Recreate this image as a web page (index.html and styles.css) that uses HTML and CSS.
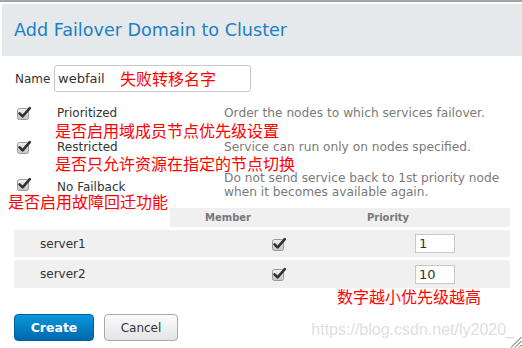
FILE: index.html
```html
<!DOCTYPE html>
<html lang="en">
<head>
    <meta charset="UTF-8">
    <title>Add Failover Domain to Cluster</title>
    <link rel="stylesheet" href="styles.css">
</head>
<body>
    <svg width="0" height="0" class="defs">
        <defs>
            <linearGradient id="boxGrad" x1="0" y1="0" x2="0" y2="1">
                <stop offset="0" stop-color="#f2f2f2"/>
                <stop offset="1" stop-color="#c4c4c4"/>
            </linearGradient>
            <symbol id="check" viewBox="0 0 14 14">
                <rect x="0.5" y="2.5" width="11" height="11" rx="2" fill="url(#boxGrad)" stroke="#9a9a9a"/>
                <path d="M2.6 7.4 L5.6 10.4 L12.8 2.2" fill="none" stroke="#2f3336" stroke-width="2.6" stroke-linecap="round" stroke-linejoin="round"/>
            </symbol>
        </defs>
    </svg>

    <div class="dialog">
        <div class="header">
            <h1>Add Failover Domain to Cluster</h1>
        </div>

        <div class="name-row">
            <label for="name">Name</label>
            <div class="name-field">
                <input type="text" id="name" value="webfail">
                <span class="note note-inline">失败转移名字</span>
            </div>
        </div>

        <div class="opt opt-1">
            <svg class="cb"><use href="#check"/></svg>
            <span class="opt-label">Prioritized</span>
            <span class="opt-desc">Order the nodes to which services failover.</span>
        </div>
        <div class="note note-opt">是否启用域成员节点优先级设置</div>

        <div class="opt opt-2">
            <svg class="cb"><use href="#check"/></svg>
            <span class="opt-label">Restricted</span>
            <span class="opt-desc">Service can run only on nodes specified.</span>
        </div>
        <div class="note note-opt">是否只允许资源在指定的节点切换</div>

        <div class="opt opt-3">
            <svg class="cb"><use href="#check"/></svg>
            <span class="opt-label">No Failback</span>
            <span class="opt-desc">Do not send service back to 1st priority node<br>when it becomes available again.</span>
        </div>
        <div class="note note-left">是否启用故障回迁功能</div>

        <div class="nodes">
            <div class="nodes-head">
                <div class="col-name"></div>
                <div class="col-member">Member</div>
                <div class="col-priority">Priority</div>
            </div>
            <div class="nodes-row">
                <div class="col-name">server1</div>
                <div class="col-member"><svg class="cb"><use href="#check"/></svg></div>
                <div class="col-priority"><input type="text" class="prio" value="1"></div>
            </div>
            <div class="nodes-row">
                <div class="col-name">server2</div>
                <div class="col-member"><svg class="cb"><use href="#check"/></svg></div>
                <div class="col-priority"><input type="text" class="prio" value="10"></div>
            </div>
        </div>
        <div class="note note-table">数字越小优先级越高</div>

        <div class="actions">
            <button class="btn btn-create">Create</button>
            <button class="btn btn-cancel">Cancel</button>
        </div>

        <div class="watermark">https://blog.csdn.net/ly2020_</div>
        <svg class="grip" width="12" height="12" viewBox="0 0 12 12">
            <path d="M11.5 1 L1 11.5 M11.5 5 L5 11.5 M11.5 9 L9 11.5" stroke="#555" stroke-width="1"/>
        </svg>
    </div>
</body>
</html>
```

FILE: styles.css
```css
body {
    margin: 0;
    background: #fff;
    font-family: 'DejaVu Sans', Verdana, sans-serif;
    color: #333;
}

.defs {
    position: absolute;
}

.dialog {
    position: relative;
    width: 522px;
    height: 348px;
    border-top: 2px solid #a4a4a4;
    box-sizing: border-box;
    overflow: hidden;
}

.header {
    margin: 2px 0 0 2px;
    height: 52px;
    background: #e6e9ec;
    display: flex;
    align-items: center;
    padding-left: 12px;
}

h1 {
    margin: 0;
    font-size: 17.6px;
    font-weight: normal;
    color: #1b80c4;
}

.name-row {
    display: flex;
    align-items: center;
    margin-top: 9px;
    padding-left: 15px;
    height: 27px;
}

.name-row label {
    font-size: 12px;
    width: 39px;
}

.name-field {
    position: relative;
}

.name-field input {
    width: 197px;
    height: 27px;
    box-sizing: border-box;
    border: 1px solid #c8c8c8;
    border-radius: 3px;
    padding: 0 3px;
    font-family: 'DejaVu Sans', sans-serif;
    font-size: 13px;
    color: #333;
}

.note {
    color: #ff0000;
    font-family: 'Noto Sans CJK SC', sans-serif;
    font-size: 16px;
    line-height: 16px;
}

.note-inline {
    position: absolute;
    left: 66px;
    top: 5px;
}

.cb {
    width: 14px;
    height: 14px;
}

.opt {
    display: grid;
    grid-template-columns: 40px 167px 1fr;
    align-items: center;
    padding-left: 17px;
    font-size: 12px;
}

.opt-1 {
    margin-top: 12px;
    height: 18px;
}

.opt-2 {
    height: 17px;
}

.opt-3 {
    height: 28px;
    align-items: start;
}

.opt-3 .cb {
    margin-top: 6px;
}

.opt-3 .opt-label {
    margin-top: 9px;
}

.opt-desc {
    color: #7a7a7a;
    font-size: 12.2px;
    line-height: 14px;
}

.note-opt {
    padding-left: 55px;
}

.note-left {
    padding-left: 8px;
    margin-top: -5px;
    line-height: 14px;
}

.nodes {
    margin-left: 14px;
    width: 496px;
}

.nodes-head,
.nodes-row {
    display: grid;
    grid-template-columns: 156px 116px 1fr;
}

.nodes-head {
    height: 19px;
    font-size: 10px;
    font-weight: bold;
    color: #777;
}

.nodes-head .col-member,
.nodes-head .col-priority {
    background: #f0f0f0;
    display: flex;
    align-items: center;
    justify-content: center;
}

.nodes-head .col-priority {
    padding-right: 20px;
}

.nodes-row {
    margin-top: 3px;
    height: 27px;
    background: #f0f0f0;
    align-items: center;
    font-size: 12px;
}

.nodes-row + .nodes-row {
    height: 28px;
}

.nodes-row .col-name {
    padding-left: 26px;
}

.nodes-row .col-member {
    display: flex;
    justify-content: flex-end;
}

.nodes-row .col-priority {
    padding-left: 129px;
}

.prio {
    width: 40px;
    height: 19px;
    box-sizing: border-box;
    border: 1px solid #c8c8c8;
    padding: 0 3px;
    font-family: 'DejaVu Sans', sans-serif;
    font-size: 13px;
    color: #333;
}

.note-table {
    padding-left: 337px;
}

.actions {
    display: flex;
    gap: 10px;
    margin-top: 10px;
    padding-left: 14px;
}

.btn {
    height: 27px;
    border-radius: 4px;
    font-family: 'DejaVu Sans', sans-serif;
    font-size: 12px;
    cursor: pointer;
}

.btn-create {
    width: 80px;
    border: 1px solid #02609c;
    background: linear-gradient(#0a97dc, #0067ad);
    color: #fff;
    font-weight: bold;
    font-size: 12.5px;
}

.btn-cancel {
    width: 74px;
    border: 1px solid #a9a9a9;
    background: linear-gradient(#fbfbfb, #e2e4e6);
    color: #333;
}

.watermark {
    position: absolute;
    right: 7px;
    bottom: 9px;
    font-family: 'Liberation Sans', Arial, sans-serif;
    font-size: 16px;
    color: #e0e0e0;
}

.grip {
    position: absolute;
    right: 0;
    bottom: 0;
}
```
